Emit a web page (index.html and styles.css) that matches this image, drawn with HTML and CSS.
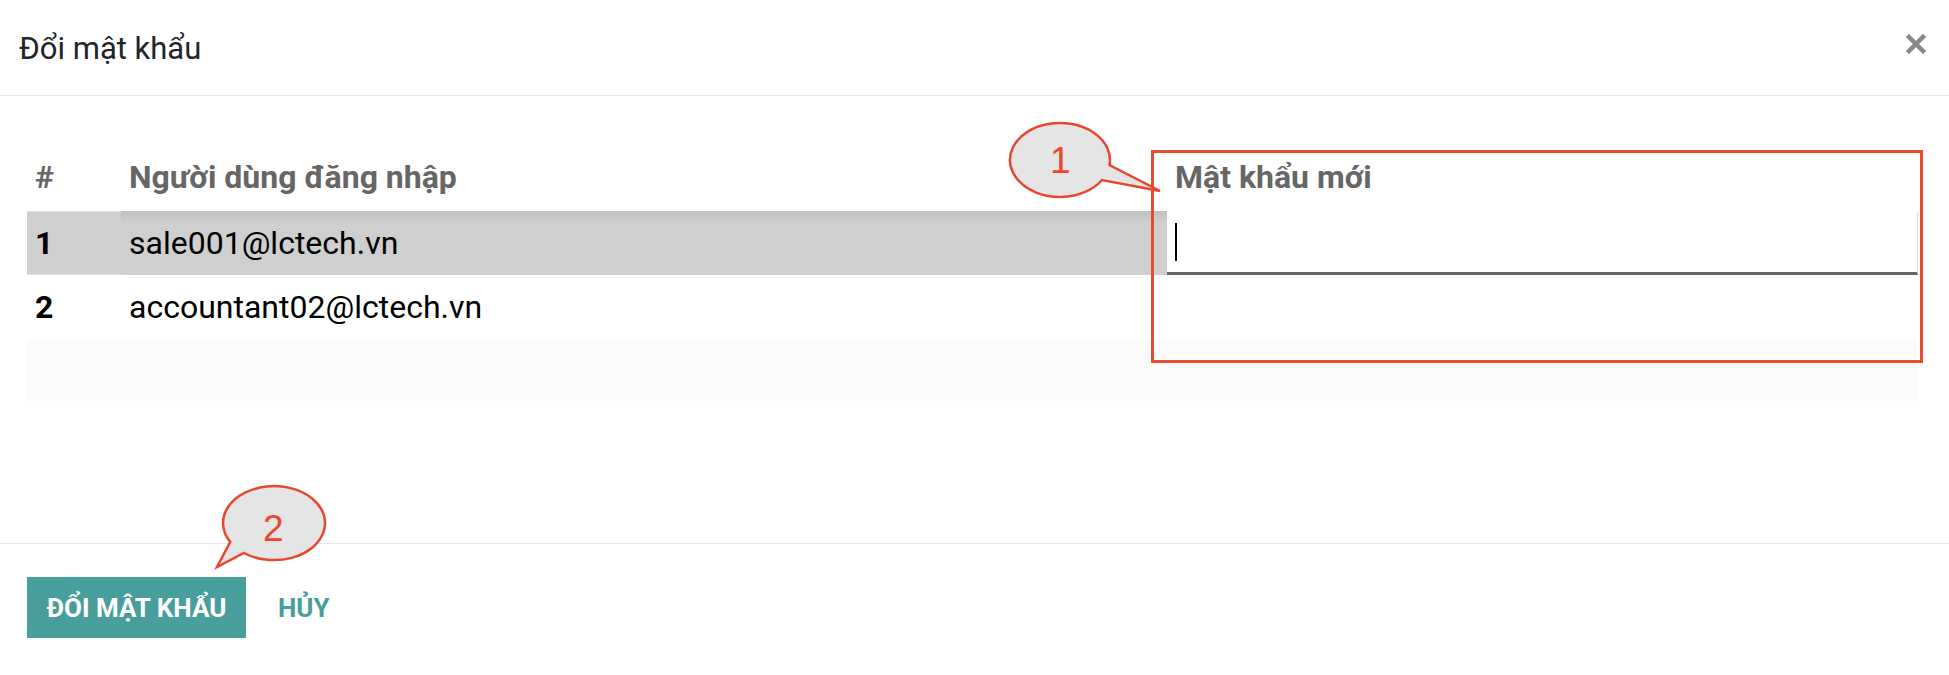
FILE: index.html
```html
<!DOCTYPE html>
<html lang="vi">
  <head>
    <meta charset="UTF-8" />
    <meta name="viewport" content="width=device-width, initial-scale=1.0" />
    <title>Đổi mật khẩu</title>
    <link rel="stylesheet" href="styles.css">
  </head>
  <body>
    <div class="modal">
      <header class="modal-header">
        <h4 class="modal-title">Đổi mật khẩu</h4>
        <button type="button" class="close" aria-label="Close">
          <svg width="20" height="20" viewBox="0 0 20 20">
            <path d="M3 3 L17 17 M17 3 L3 17" stroke="#888" stroke-width="4.5" stroke-linecap="square" />
          </svg>
        </button>
      </header>

      <main class="modal-body">
        <table class="user-list">
          <colgroup>
            <col class="col-num" />
            <col class="col-login" />
            <col class="col-pass" />
          </colgroup>
          <thead>
            <tr>
              <th>#</th>
              <th>Người dùng đăng nhập</th>
              <th>Mật khẩu mới</th>
            </tr>
          </thead>
          <tbody>
            <tr class="selected">
              <td class="num">1</td>
              <td>sale001@lctech.vn</td>
              <td class="cell-input">
                <div class="pass-input"><span class="caret"></span></div>
              </td>
            </tr>
            <tr>
              <td class="num">2</td>
              <td>accountant02@lctech.vn</td>
              <td></td>
            </tr>
            <tr class="filler">
              <td></td>
              <td></td>
              <td></td>
            </tr>
          </tbody>
        </table>
      </main>

      <footer class="modal-footer">
        <button type="button" class="btn btn-primary">Đổi mật khẩu</button>
        <button type="button" class="btn btn-link">Hủy</button>
      </footer>

      <!-- annotations drawn over the screenshot -->
      <div class="mark-box"></div>
      <div class="callout callout-1">
        <svg width="170" height="90" viewBox="0 0 170 90">
          <path d="M109.5 50 A50 37 0 1 0 102 65 L160 76 Z" />
        </svg>
        <span>1</span>
      </div>
      <div class="callout callout-2">
        <svg width="130" height="95" viewBox="0 0 130 95">
          <path d="M34 73 A51 37 0 1 0 20.2 62 L7 87 Z" />
        </svg>
        <span>2</span>
      </div>
    </div>
  </body>
</html>
```

FILE: styles.css
```css
html,
body {
  margin: 0;
  background: #fff;
}
body {
  font-family: Roboto, "Noto Sans", sans-serif;
  color: #212529;
}
.modal {
  position: relative;
  width: 1949px;
  height: 675px;
}

/* header */
.modal-header {
  display: flex;
  align-items: center;
  justify-content: space-between;
  height: 96px;
  padding: 0 23px 0 19px;
  border-bottom: 1px solid #e8e8ec;
  box-sizing: border-box;
}
.modal-title {
  margin: 0;
  font-size: 31px;
  font-weight: 400;
  line-height: 1;
  padding-top: 2px;
}
.close {
  background: none;
  border: none;
  padding: 0;
  margin-top: -8px;
  cursor: pointer;
  display: flex;
}

/* body */
.modal-body {
  height: 447px;
  padding: 49px 31px 0 27px;
  box-sizing: border-box;
}
.user-list {
  width: 1891px;
  border-collapse: collapse;
  table-layout: fixed;
  font-size: 32px;
}
.col-num {
  width: 94px;
}
.col-login {
  width: 1046px;
}
.col-pass {
  width: 751px;
}
.user-list th {
  text-align: left;
  color: #666;
  font-weight: 700;
  line-height: 48px;
  padding: 8px 8px 10px;
}
.user-list td {
  color: #000;
  line-height: 48px;
  height: 48px;
  padding: 8px;
}
.user-list td.num {
  font-weight: 700;
}
.user-list tr.selected {
  background: linear-gradient(#c0c0c0, #cfcfcf 12px);
}
.user-list tr.selected td.num {
  background: #cfcfcf;
  box-shadow: inset 0 1px #dde2e6, inset 0 -1px #dde2e6;
}
.user-list td.cell-input {
  padding: 0;
  vertical-align: top;
}
.pass-input {
  height: 61px;
  background: #fff;
  border-bottom: 3px solid #666;
  border-right: 1px solid #dde1e6;
  box-sizing: content-box;
  display: flex;
}
.caret {
  width: 2px;
  height: 38px;
  margin: 12px 0 0 8px;
  background: #000;
}
.user-list tr.filler td {
  height: 46px;
  background: #fbfbfb;
}

/* footer */
.modal-footer {
  display: flex;
  align-items: center;
  gap: 32px;
  padding: 33px 27px 0;
  border-top: 1px solid #e8e8ec;
}
.btn {
  font-family: Roboto, "Noto Sans", sans-serif;
  font-size: 26px;
  font-weight: 700;
  text-transform: uppercase;
  border: none;
  cursor: pointer;
}
.btn-primary {
  width: 219px;
  height: 61px;
  background: #489e9a;
  color: #fff;
  padding: 0;
}
.btn-link {
  background: none;
  color: #489e9a;
  padding: 0;
}

/* annotations */
.mark-box {
  position: absolute;
  left: 1151px;
  top: 150px;
  width: 772px;
  height: 213px;
  border: 3px solid #ea4a2e;
  box-sizing: border-box;
}
.callout {
  position: absolute;
}
.callout svg {
  display: block;
}
.callout path {
  fill: #e5e5e5;
  stroke: #e8472e;
  stroke-width: 2.5;
  stroke-linejoin: miter;
}
.callout span {
  position: absolute;
  font-family: "Liberation Sans", Arial, sans-serif;
  font-size: 37px;
  color: #e8472e;
  line-height: 1;
}
.callout-1 {
  left: 1000px;
  top: 115px;
}
.callout-1 span {
  left: 50px;
  top: 27px;
}
.callout-2 {
  left: 210px;
  top: 480px;
}
.callout-2 span {
  left: 53px;
  top: 30px;
}
```
